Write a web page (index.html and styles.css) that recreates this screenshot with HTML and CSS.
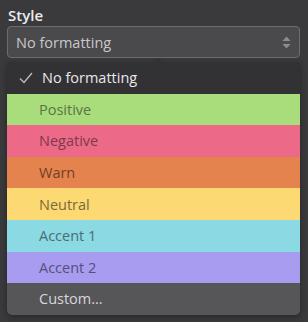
FILE: index.html
```html
<!DOCTYPE html>
<html lang="en">
<head>
  <meta charset="UTF-8">
  <title>Style</title>
  <link rel="stylesheet" href="styles.css">
</head>
<body>
  <div class="field">
    <label class="label">Style</label>
    <div class="select">
      <span>No formatting</span>
      <svg class="updown" width="9" height="13" viewBox="0 0 9 13">
        <path d="M4.5 0.5 L8.5 5 L0.5 5 Z" fill="#8d8c8f"/>
        <path d="M4.5 12.5 L8.5 8 L0.5 8 Z" fill="#8d8c8f"/>
      </svg>
    </div>
    <div class="menu">
      <div class="arrow"></div>
      <div class="item selected">
        <svg class="check" width="14" height="12" viewBox="0 0 14 12">
          <path d="M1 6.5 L5 10.5 L13 1" fill="none" stroke="#bdbcbf" stroke-width="1.3"/>
        </svg>
        <span>No formatting</span>
      </div>
      <div class="item positive">Positive</div>
      <div class="item negative">Negative</div>
      <div class="item warn">Warn</div>
      <div class="item neutral">Neutral</div>
      <div class="item accent1">Accent 1</div>
      <div class="item accent2">Accent 2</div>
      <div class="item custom">Custom...</div>
    </div>
  </div>
</body>
</html>
```

FILE: styles.css
```css
body {
  margin: 0;
  background-color: #3a393c;
  font-family: 'Open Sans', sans-serif;
  width: 308px;
  height: 322px;
  overflow: hidden;
}

.field {
  padding: 5px 8px 0 7px;
  display: flex;
  flex-direction: column;
}

.label {
  color: #ececec;
  font-size: 15px;
  font-weight: 600;
  line-height: 20px;
  padding-left: 1px;
  margin-bottom: 1px;
}

.select {
  height: 30px;
  border: 1px solid #6c6b6e;
  border-radius: 4px;
  background-color: #4a494c;
  display: flex;
  align-items: center;
  justify-content: space-between;
  padding: 0 8px 0 8px;
  color: #c9c8cb;
  font-size: 14.5px;
}

.menu {
  position: relative;
  margin-top: 4px;
  background-color: #323134;
  border-radius: 0 0 5px 5px;
  box-shadow: 0 2px 6px rgba(0, 0, 0, 0.35);
}

.arrow {
  position: absolute;
  top: -4px;
  left: 146px;
  width: 0;
  height: 0;
  border-left: 5px solid transparent;
  border-right: 5px solid transparent;
  border-bottom: 4px solid #323134;
}

.item {
  height: 31.6px;
  display: flex;
  align-items: center;
  padding-left: 32px;
  font-size: 14.5px;
  box-sizing: border-box;
}

.item.selected {
  padding-left: 12px;
  color: #e9e8eb;
}

.check {
  margin-right: 9px;
}

.positive { background-color: #a9dc7b; color: #5c7447; }
.negative { background-color: #ec6a88; color: #7e3a4b; }
.warn { background-color: #e5834e; color: #713f24; }
.neutral { background-color: #fcd972; color: #7a6a3a; }
.accent1 { background-color: #8bd9e3; color: #4a6e73; }
.accent2 { background-color: #a79cef; color: #564f7a; }

.custom {
  background-color: #565558;
  color: #d8d7da;
  border-radius: 0 0 5px 5px;
}
```
